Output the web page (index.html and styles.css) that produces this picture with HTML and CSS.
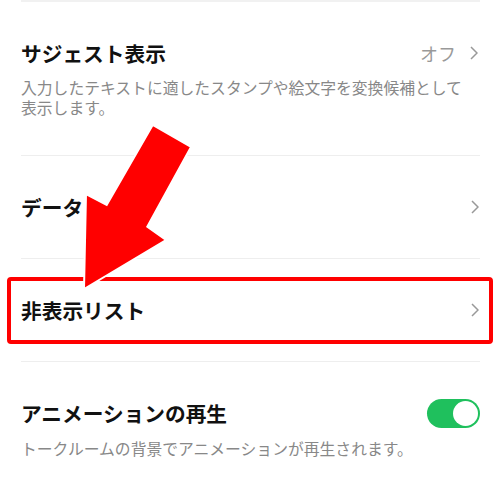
FILE: index.html
```html
<!DOCTYPE html>
<html lang="ja">
<head>
<meta charset="utf-8">
<link rel="stylesheet" href="styles.css">
</head>
<body>
<div class="page">
  <div class="list">
    <div class="row row-suggest">
      <div class="row-head">
        <span class="title">サジェスト表示</span>
        <span class="value">オフ
          <svg class="chev" viewBox="0 0 8 14" width="8" height="14"><path d="M1 1 L7 7 L1 13" fill="none" stroke="#999" stroke-width="1.5"/></svg>
        </span>
      </div>
      <p class="desc">入力したテキストに適したスタンプや絵文字を変換候補として表示します。</p>
    </div>
    <div class="row row-simple">
      <div class="row-head">
        <span class="title">データ</span>
        <svg class="chev" viewBox="0 0 8 14" width="8" height="14"><path d="M1 1 L7 7 L1 13" fill="none" stroke="#999" stroke-width="1.5"/></svg>
      </div>
    </div>
    <div class="row row-simple">
      <div class="row-head">
        <span class="title">非表示リスト</span>
        <svg class="chev" viewBox="0 0 8 14" width="8" height="14"><path d="M1 1 L7 7 L1 13" fill="none" stroke="#999" stroke-width="1.5"/></svg>
      </div>
    </div>
    <div class="row row-anim">
      <div class="row-head">
        <span class="title">アニメーションの再生</span>
        <span class="toggle"><span class="knob"></span></span>
      </div>
      <p class="desc">トークルームの背景でアニメーションが再生されます。</p>
    </div>
  </div>
  <div class="highlight"></div>
  <svg class="arrow" viewBox="0 0 500 495" width="500" height="495">
    <polygon points="152.7,125 191,147 147.3,226.7 166,240 84,289 86,194 106.7,205" fill="#ff0000" stroke="#ffffff" stroke-width="2" stroke-linejoin="miter"/>
  </svg>
</div>
</body>
</html>
```
FILE: styles.css
```css
html, body {
  margin: 0;
  padding: 0;
  background: #ffffff;
}
body {
  font-family: "Noto Sans CJK JP", "Noto Sans", sans-serif;
  color: #111111;
}
.page {
  position: relative;
  width: 500px;
  height: 495px;
  overflow: hidden;
}
.list {
  padding: 0 20px 0 21px;
}
.row {
  border-top: 1px solid #eeeeee;
  box-sizing: border-box;
}
.row-suggest {
  height: 155px;
  padding-top: 37px;
  border-top: 2px solid #f1f1f1;
}
.row-simple {
  height: 103px;
  display: flex;
  flex-direction: column;
  justify-content: center;
}
.row-anim {
  padding-top: 37px;
}
.row-head {
  display: flex;
  align-items: center;
  justify-content: space-between;
  height: 28px;
}
.title {
  font-size: 20.7px;
  font-weight: 700;
  line-height: 28px;
}
.value {
  display: flex;
  align-items: center;
  gap: 14px;
  font-size: 18px;
  color: #999999;
  line-height: 28px;
  padding-right: 1px;
}
.chev {
  display: block;
  margin-right: 1px;
}
.desc {
  margin: 11px 14px 0 0;
  font-size: 15.8px;
  line-height: 20px;
  color: #888888;
}
.row-anim .desc {
  margin-top: 12px;
}
.toggle {
  position: relative;
  display: block;
  width: 53px;
  height: 29px;
  border-radius: 15px;
  background: #1fc05d;
}
.knob {
  position: absolute;
  top: 2px;
  right: 2px;
  width: 25px;
  height: 25px;
  border-radius: 50%;
  background: #ffffff;
}
.highlight {
  position: absolute;
  left: 7px;
  top: 277px;
  width: 486px;
  height: 67px;
  box-sizing: border-box;
  border: 4.5px solid #ff0000;
  border-radius: 4px;
}
.arrow {
  position: absolute;
  left: 0;
  top: 0;
}
```
